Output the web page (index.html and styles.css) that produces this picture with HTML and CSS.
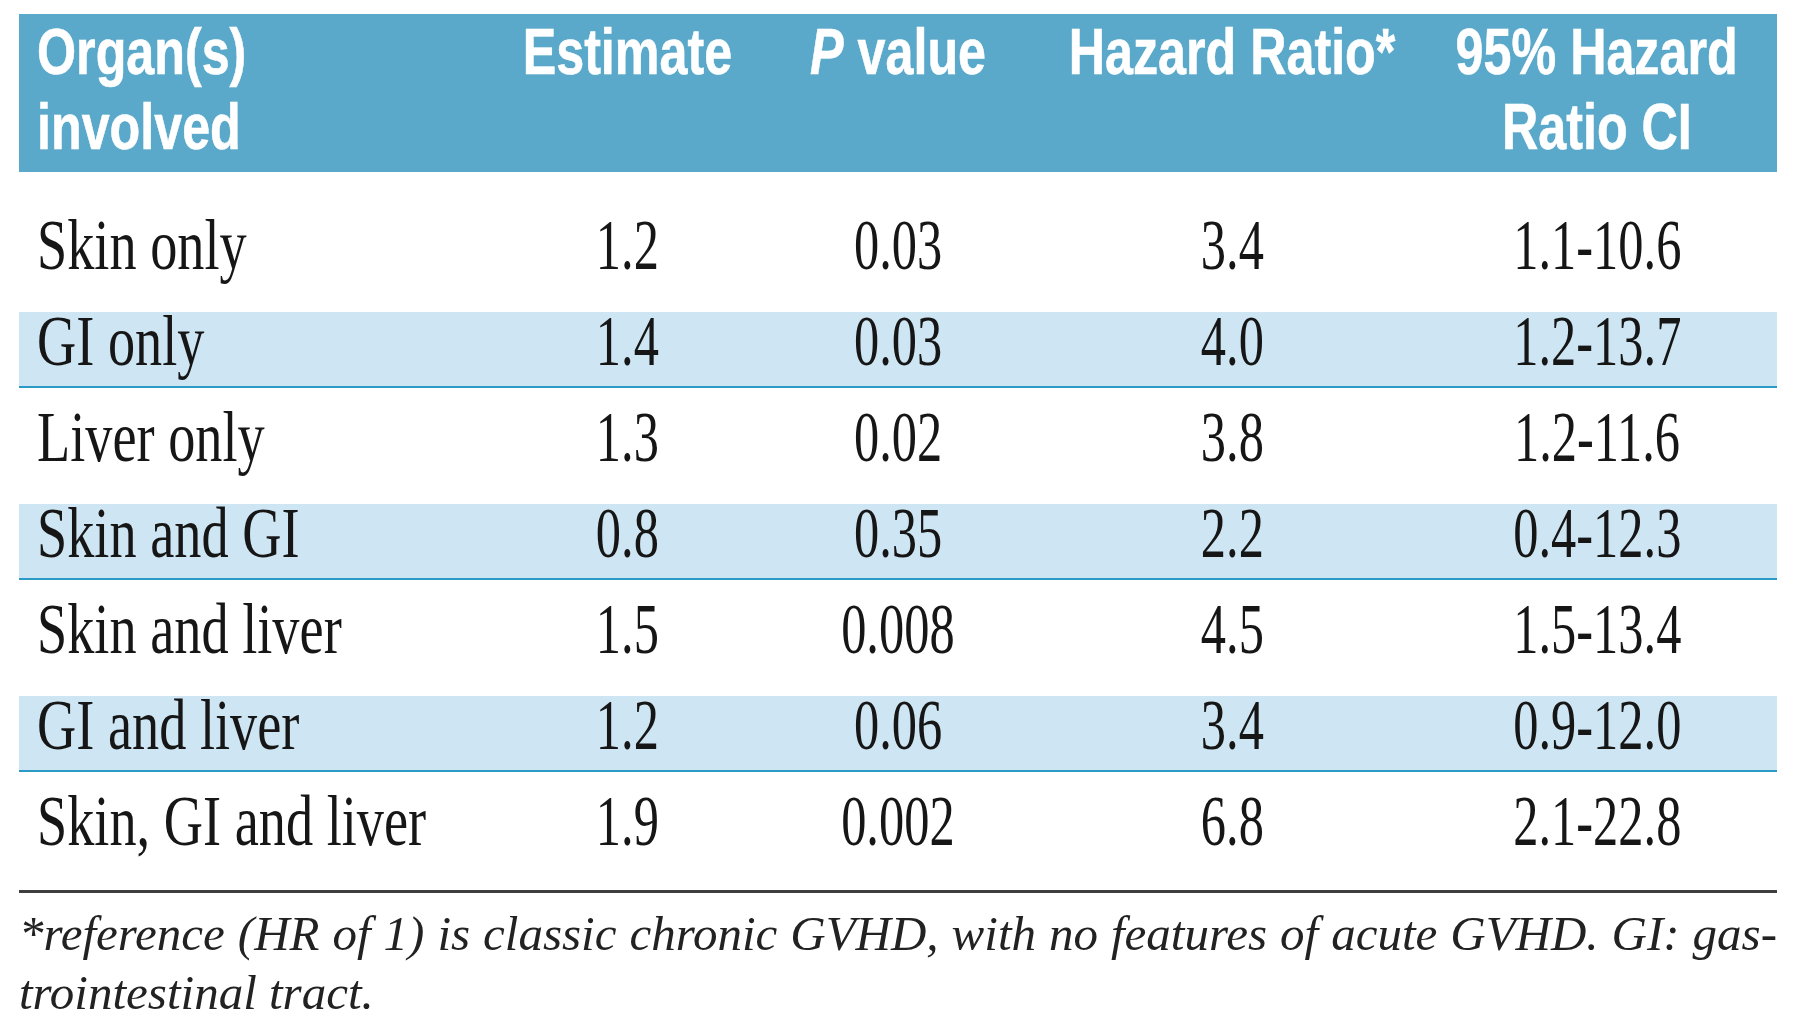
FILE: index.html
```html
<!DOCTYPE html>
<html lang="en">
<head>
<meta charset="utf-8">
<title>Organ involvement and hazard ratios</title>
<link rel="stylesheet" href="styles.css">
</head>
<body>
<div class="page">
  <div class="table">
    <div class="thead cols">
      <div class="th th-left"><span class="hx">Organ(s)</span><span class="hx">involved</span></div>
      <div class="th"><span class="hx">Estimate</span></div>
      <div class="th"><span class="hx"><i class="it">P</i> value</span></div>
      <div class="th"><span class="hx">Hazard Ratio*</span></div>
      <div class="th"><span class="hx">95% Hazard</span><span class="hx">Ratio CI</span></div>
    </div>
    <div class="tbody">
      <div class="tr cols">
        <div class="td td-left"><span class="tx">Skin only</span></div>
        <div class="td"><span class="tx">1.2</span></div>
        <div class="td"><span class="tx">0.03</span></div>
        <div class="td"><span class="tx">3.4</span></div>
        <div class="td"><span class="tx">1.1-10.6</span></div>
      </div>
      <div class="tr tr-alt cols">
        <div class="td td-left"><span class="tx">GI only</span></div>
        <div class="td"><span class="tx">1.4</span></div>
        <div class="td"><span class="tx">0.03</span></div>
        <div class="td"><span class="tx">4.0</span></div>
        <div class="td"><span class="tx">1.2-13.7</span></div>
      </div>
      <div class="tr cols">
        <div class="td td-left"><span class="tx">Liver only</span></div>
        <div class="td"><span class="tx">1.3</span></div>
        <div class="td"><span class="tx">0.02</span></div>
        <div class="td"><span class="tx">3.8</span></div>
        <div class="td"><span class="tx">1.2-11.6</span></div>
      </div>
      <div class="tr tr-alt cols">
        <div class="td td-left"><span class="tx">Skin and GI</span></div>
        <div class="td"><span class="tx">0.8</span></div>
        <div class="td"><span class="tx">0.35</span></div>
        <div class="td"><span class="tx">2.2</span></div>
        <div class="td"><span class="tx">0.4-12.3</span></div>
      </div>
      <div class="tr cols">
        <div class="td td-left"><span class="tx">Skin and liver</span></div>
        <div class="td"><span class="tx">1.5</span></div>
        <div class="td"><span class="tx">0.008</span></div>
        <div class="td"><span class="tx">4.5</span></div>
        <div class="td"><span class="tx">1.5-13.4</span></div>
      </div>
      <div class="tr tr-alt cols">
        <div class="td td-left"><span class="tx">GI and liver</span></div>
        <div class="td"><span class="tx">1.2</span></div>
        <div class="td"><span class="tx">0.06</span></div>
        <div class="td"><span class="tx">3.4</span></div>
        <div class="td"><span class="tx">0.9-12.0</span></div>
      </div>
      <div class="tr cols">
        <div class="td td-left"><span class="tx">Skin, GI and liver</span></div>
        <div class="td"><span class="tx">1.9</span></div>
        <div class="td"><span class="tx">0.002</span></div>
        <div class="td"><span class="tx">6.8</span></div>
        <div class="td"><span class="tx">2.1-22.8</span></div>
      </div>
    </div>
  </div>
  <div class="rule"></div>
  <div class="note">
    <p class="note-line note-first">*reference (HR of 1) is classic chronic GVHD, with no features of acute GVHD. GI: gas-</p>
    <p class="note-line">trointestinal tract.</p>
  </div>
</div>
</body>
</html>
```

FILE: styles.css
```css
html, body {
  margin: 0;
  padding: 0;
  background: #ffffff;
  overflow: hidden;
}

.page {
  width: 1758px;
  padding: 14px 23px 0 19px;
}

.cols {
  display: grid;
  grid-template-columns: 486px 244px 298px 370px 360px;
}

/* header */
.thead {
  box-sizing: border-box;
  height: 158px;
  padding-top: 1px;
  background: #5aa9ca;
  color: #ffffff;
  font-family: "Liberation Sans", Arial, sans-serif;
  font-weight: bold;
  font-size: 64px;
  line-height: 75px;
  -webkit-text-stroke: 0.6px #ffffff;
}

.th {
  display: flex;
  flex-direction: column;
  align-items: center;
}

.th-left {
  align-items: flex-start;
  padding-left: 18px;
}

.hx {
  display: block;
  white-space: nowrap;
  transform: scaleX(0.785);
  transform-origin: center;
}

.th-left .hx {
  transform-origin: left center;
}

.it {
  font-style: italic;
}

/* body rows */
.tbody {
  margin-top: 44px;
  display: flex;
  flex-direction: column;
  gap: 20px;
}

.tr {
  box-sizing: border-box;
  height: 76px;
  font-family: "Liberation Serif", "Times New Roman", serif;
  font-size: 71px;
  line-height: 58px;
  color: #161616;
}

.tr-alt {
  background: #cee6f3;
  border-bottom: 2px solid #2b9bc5;
}

.td {
  display: flex;
  justify-content: center;
}

.td-left {
  justify-content: flex-start;
  padding-left: 18px;
}

.tx {
  display: inline-block;
  white-space: nowrap;
  transform: scaleX(0.71);
  transform-origin: center;
}

.td-left .tx {
  transform: scaleX(0.765);
  transform-origin: left center;
}

/* footer */
.rule {
  margin-top: 22px;
  height: 3px;
  background: #3e3e3e;
}

.note {
  margin-top: 11px;
  font-family: "Liberation Serif", "Times New Roman", serif;
  font-style: italic;
  font-size: 49px;
  line-height: 59px;
  color: #222222;
}

.note-line {
  margin: 0;
  white-space: nowrap;
}

.note-first {
  white-space: normal;
  text-align: justify;
  text-align-last: justify;
}
```
